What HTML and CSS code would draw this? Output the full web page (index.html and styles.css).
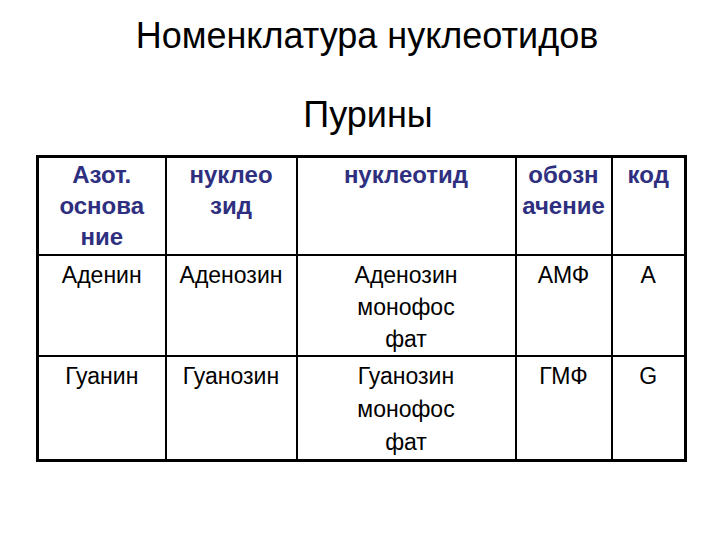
FILE: index.html
```html
<!DOCTYPE html>
<html lang="ru">
<head>
<meta charset="utf-8">
<title>Номенклатура нуклеотидов</title>
<link rel="stylesheet" href="styles.css">
</head>
<body>
<div class="slide">
  <h1 class="title">Номенклатура нуклеотидов</h1>
  <h2 class="subtitle">Пурины</h2>
  <table class="grid">
    <colgroup>
      <col class="c1"><col class="c2"><col class="c3"><col class="c4"><col class="c5">
    </colgroup>
    <tr class="head">
      <th>Азот.<br>основа<br>ние</th>
      <th>нуклео<br>зид</th>
      <th>нуклеотид</th>
      <th>обозн<br>ачение</th>
      <th>код</th>
    </tr>
    <tr class="r1">
      <td>Аденин</td>
      <td>Аденозин</td>
      <td>Аденозин<br>монофос<br>фат</td>
      <td>АМФ</td>
      <td>А</td>
    </tr>
    <tr class="r2">
      <td>Гуанин</td>
      <td>Гуанозин</td>
      <td>Гуанозин<br>монофос<br>фат</td>
      <td>ГМФ</td>
      <td>G</td>
    </tr>
  </table>
</div>
</body>
</html>
```

FILE: styles.css
```css
html, body {
  margin: 0;
  padding: 0;
  background: #ffffff;
}
.slide {
  width: 720px;
  height: 540px;
  display: flex;
  flex-direction: column;
  align-items: center;
  font-family: "Liberation Sans", Arial, sans-serif;
  color: #000;
}
.title {
  margin: 14px 0 0 14px;
  font-size: 36px;
  font-weight: normal;
  line-height: 44px;
}
.subtitle {
  margin: 35px 0 0 16px;
  font-size: 36px;
  font-weight: normal;
  line-height: 44px;
}
.grid {
  margin: 18px 0 0 36px;
  align-self: flex-start;
  border-collapse: collapse;
  table-layout: fixed;
  width: 648px;
  border: 3px solid #000;
}
.c1 { width: 128px; }
.c2 { width: 131px; }
.c3 { width: 219px; }
.c4 { width: 96px; }
.c5 { width: 74px; }
.grid th, .grid td {
  border: 2px solid #000;
  vertical-align: top;
  text-align: center;
}
.grid th {
  font-size: 24px;
  font-weight: bold;
  line-height: 31px;
  padding: 1px 0 0 0;
  color: #2f2f7f;
}
.grid td {
  font-size: 23px;
  padding: 3px 0 0 0;
}
.r1 td { line-height: 32px; }
.r2 td { line-height: 33px; }
.head { height: 98px; }
.r1 { height: 99px; }
.r2 { height: 102px; }
```
